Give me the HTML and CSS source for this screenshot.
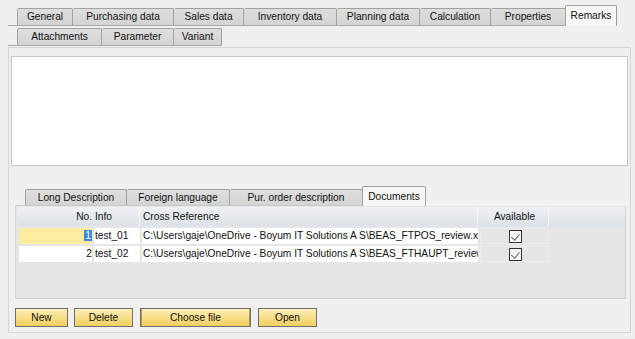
FILE: index.html
```html
<!DOCTYPE html>
<html lang="en">
<head>
    <meta charset="UTF-8">
    <title>Item Master Data - Remarks</title>
    <link rel="stylesheet" href="styles.css">
</head>
<body>

    <!-- Main tabs -->
    <div class="tab-row main-row1">
        <span class="tab">General</span>
        <span class="tab">Purchasing data</span>
        <span class="tab">Sales data</span>
        <span class="tab">Inventory data</span>
        <span class="tab">Planning data</span>
        <span class="tab">Calculation</span>
        <span class="tab">Properties</span>
        <span class="tab active">Remarks</span>
    </div>
    <div class="tab-row main-row2">
        <span class="tab">Attachments</span>
        <span class="tab">Parameter</span>
        <span class="tab">Variant</span>
    </div>

    <div class="panel">
        <div class="remarks-box"></div>

        <!-- Description tabs -->
        <div class="tab-row sub-row">
            <span class="tab">Long Description</span>
            <span class="tab">Foreign language</span>
            <span class="tab">Pur. order description</span>
            <span class="tab active">Documents</span>
        </div>

        <div class="grid-panel">
            <div class="grid-row grid-head">
                <div class="cell num">No.</div>
                <div class="cell">Info</div>
                <div class="cell">Cross Reference</div>
                <div class="cell center">Available</div>
            </div>
            <div class="grid-row">
                <div class="cell num current"><span class="sel">1</span></div>
                <div class="cell">test_01</div>
                <div class="cell">C:\Users\gaje\OneDrive - Boyum IT Solutions A S\BEAS_FTPOS_review.xlsx</div>
                <div class="cell center check-cell"><span class="check"></span></div>
            </div>
            <div class="grid-row">
                <div class="cell num">2</div>
                <div class="cell">test_02</div>
                <div class="cell">C:\Users\gaje\OneDrive - Boyum IT Solutions A S\BEAS_FTHAUPT_review.xlsx</div>
                <div class="cell center check-cell"><span class="check"></span></div>
            </div>
        </div>

        <div class="buttons">
            <button class="btn btn-new">New</button>
            <button class="btn btn-delete">Delete</button>
            <button class="btn btn-choose">Choose file</button>
            <button class="btn btn-open">Open</button>
        </div>
    </div>

</body>
</html>
```

FILE: styles.css
```css
* {
    margin: 0;
    padding: 0;
    box-sizing: border-box;
}
body {
    background: #f0f0f0;
    font-family: "Liberation Sans", Arial, sans-serif;
    font-size: 10.2px;
    color: #111;
    width: 635px;
    height: 339px;
    overflow: hidden;
}

/* Tabs */
.tab-row {
    display: grid;
    align-items: end;
    width: max-content;
    border-bottom: 1px solid #a8a8a8;
}
.tab {
    height: 17px;
    line-height: 15px;
    text-align: center;
    white-space: nowrap;
    overflow: hidden;
    background: linear-gradient(#dedede, #d4d4d4);
    border: 1px solid #a0a0a0;
    border-bottom: none;
    border-left: none;
    border-radius: 2px 2px 0 0;
}
.tab:first-child {
    border-left: 1px solid #a0a0a0;
}
.tab.active {
    background: #f7f7f7;
    height: 21px;
    margin-bottom: -1px;
    line-height: 19px;
    border-left: 1px solid #a0a0a0;
}
.main-row1 {
    margin: 5px 0 0 8px;
    padding-left: 9px;
    grid-template-columns: 56px 101px 70px 93px 83px 71px 75px 51px;
}
.main-row1 .tab.active {
    margin-left: -1px;
    width: 52px;
}
.main-row2 {
    margin: 2px 0 0 8px;
    padding-left: 9px;
    grid-template-columns: 85px 72px 48px;
}

/* Form panel */
.panel {
    margin: 1px 0 0 8px;
    width: 623px;
    height: 286px;
    border: 1px solid #d6d6d6;
    padding: 8px 2px 0 2px;
}
.remarks-box {
    width: 617px;
    height: 110px;
    background: #fff;
    border: 1px solid #c6c6c6;
}

.sub-row {
    margin: 20px 0 0 4px;
    padding-left: 10px;
    border-bottom-color: #c8c8c8;
    grid-template-columns: 102px 103px 133px 63px;
}
.sub-row .tab {
    height: 16px;
}
.sub-row .tab.active {
    margin-left: -1px;
    width: 64px;
    height: 20px;
}

/* Documents grid */
.grid-panel {
    margin-left: 4px;
    width: 611px;
    height: 93px;
    background: #e6e6e6;
    border: 1px solid #d2d2d2;
    border-top: none;
    padding: 1px 0 0 2px;
}
.grid-row {
    display: grid;
    grid-template-columns: 73px 46px 336px 69px;
    column-gap: 2px;
    height: 16px;
    margin-bottom: 2px;
    padding-left: 1px;
}
.grid-head {
    height: 19px;
    padding-left: 0;
    grid-template-columns: 74px 46px 336px 69px;
    background: linear-gradient(#eef1f5, #dde2e8);
}
.grid-head .cell {
    background: none;
    line-height: 19px;
    border-right: 1px solid #f4f6f9;
}
.cell {
    background: #fff;
    line-height: 16px;
    white-space: nowrap;
    overflow: hidden;
    padding-left: 1px;
}
.cell.num {
    text-align: right;
    padding: 0;
}
.grid-head .cell.num {
    border-right: none;
}
.cell.center {
    text-align: center;
}
.cell.current {
    background: #fcec9f;
}
.sel {
    background: #3c8be0;
    color: #fff;
    padding: 0 1px;
}
.check-cell {
    background: #e6e6e6;
    border: 1px solid #ececec;
    display: flex;
    align-items: center;
    justify-content: center;
}
.check {
    width: 13px;
    height: 13px;
    border: 1px solid #333;
    background: #f6f6f6;
    position: relative;
}
.check::after {
    content: "";
    position: absolute;
    left: 3px;
    top: 1px;
    width: 4px;
    height: 7px;
    border: solid #666;
    border-width: 0 1px 1px 0;
    transform: rotate(40deg);
}

/* Buttons */
.buttons {
    display: flex;
    margin: 9px 0 0 4px;
}
.btn {
    height: 19px;
    font-family: inherit;
    font-size: 10.2px;
    color: #111;
    background: linear-gradient(#fdeeb6, #f2cf5f);
    border: 1px solid #6e6e6e;
}
.btn-new { width: 53px; }
.btn-delete { width: 59px; margin-left: 6px; }
.btn-choose {
    width: 111px;
    margin-left: 7px;
    box-shadow: inset 1px 0 0 #b59a45, inset -1px 0 0 #b59a45;
}
.btn-open { width: 59px; margin-left: 7px; }
```
